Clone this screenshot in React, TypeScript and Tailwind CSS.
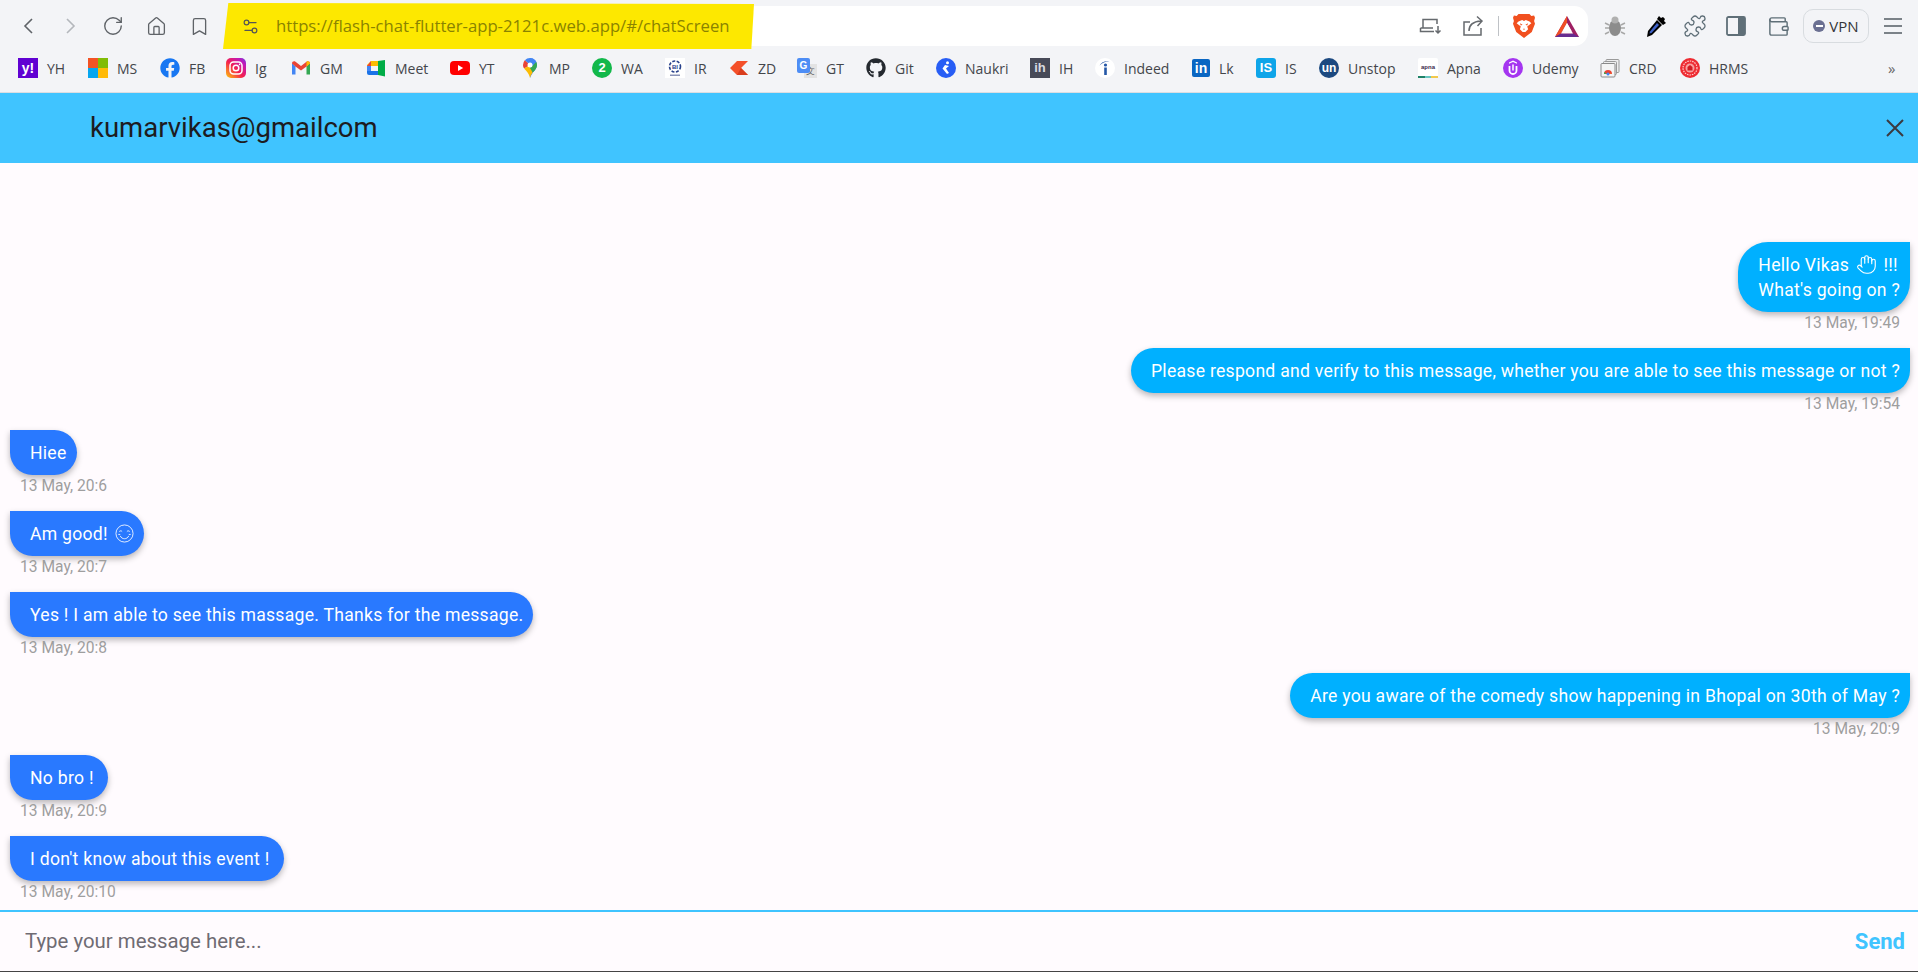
import type { ReactNode } from "react";
import { Bookmark, Hand, Home, Puzzle, RotateCw, Settings2, Wallet } from "lucide-react";
import { FaFacebook, FaGithub } from "react-icons/fa";

function Yahoo() {
  return (
    <div className="flex h-5 w-5 items-center justify-center bg-[#6001d2] font-['Liberation_Sans',sans-serif] text-[14px] font-bold text-white">
      y!
    </div>
  );
}

function Microsoft() {
  return (
    <div className="grid h-5 w-5 grid-cols-2 grid-rows-2">
      <div className="bg-[#f35325]" />
      <div className="bg-[#81bc06]" />
      <div className="bg-[#05a6f0]" />
      <div className="bg-[#ffba08]" />
    </div>
  );
}

function Instagram() {
  return (
    <svg viewBox="0 0 20 20" className="h-5 w-5">
      <defs>
        <linearGradient id="ig" x1="0" y1="1" x2="1" y2="0">
          <stop offset="0" stopColor="#fdc90b" />
          <stop offset="0.45" stopColor="#f5204e" />
          <stop offset="0.8" stopColor="#c118b8" />
          <stop offset="1" stopColor="#6a3fe0" />
        </linearGradient>
      </defs>
      <rect width="20" height="20" rx="5" fill="url(#ig)" />
      <rect x="4" y="4" width="12" height="12" rx="3.5" fill="none" stroke="#fff" strokeWidth="1.5" />
      <circle cx="10" cy="10" r="2.8" fill="none" stroke="#fff" strokeWidth="1.5" />
      <circle cx="13.6" cy="6.4" r="0.8" fill="#fff" />
    </svg>
  );
}

function Gmail() {
  return (
    <svg viewBox="0 0 20 20" className="h-5 w-5">
      <path d="M1 5v11.5h3.500V8.500z" fill="#4285f4" />
      <path d="M19 5v11.500h-3.500V8.500z" fill="#34a853" />
      <path d="M1 5.500C1 3.500 3 2.700 4.500 3.800L10 8l5.500-4.200C17 2.700 19 3.500 19 5.500l-3.500 3L10 12.500 4.500 8.500z" fill="#ea4335" />
      <path d="M15.500 3.800C17 2.700 19 3.500 19 5.500l-3.500 3z" fill="#fbbc04" />
    </svg>
  );
}

function Meet() {
  return (
    <svg viewBox="0 0 20 20" className="h-5 w-5">
      <path d="M5 3h7v5H1V7z" fill="#fbbc04" />
      <path d="M1 8h4v5H1z" fill="#4285f4" />
      <path d="M1 13h11v4H3a2 2 0 0 1-2-2z" fill="#1a73e8" />
      <path d="M12 3v14l7 1.500V2z" fill="#00ac47" />
      <path d="M5 8h7v5H5z" fill="#f3f4f7" />
      <path d="M5 3v5H1z" fill="#ea4335" />
    </svg>
  );
}

function Youtube() {
  return (
    <svg viewBox="0 0 20 20" className="h-5 w-5">
      <rect y="3" width="20" height="14" rx="4" fill="#f00" />
      <path d="M8 7l5.200 3L8 13z" fill="#fff" />
    </svg>
  );
}

function Maps() {
  return (
    <svg viewBox="0 0 20 20" className="h-5 w-5">
      <path d="M10 0a7 7 0 0 1 7 7c0 4-4 6-7 13z" fill="#4285f4" />
      <path d="M10 0a7 7 0 0 0-5.200 2.300L10 7l5.200-4.700A7 7 0 0 0 10 0z" fill="#4285f4" />
      <path d="M4.800 2.300A7 7 0 0 0 3 7c0 1.400.5 2.500 1.200 3.500L10 7z" fill="#ea4335" />
      <path d="M4.200 10.500C6 13 9 15 10 20c.5-2.400 1.500-4 2.700-5.500L10 7z" fill="#fbbc04" />
      <path d="M12.700 14.500C14.800 12.500 17 10.500 17 7c0-1.100-.3-2.300-.8-3.200L10 10z" fill="#34a853" />
      <path d="M15.200 2.300L10 7v3l6.200-6.200a7 7 0 0 0-1-1.500z" fill="#4285f4" />
      <circle cx="10" cy="7" r="2.500" fill="#fff" />
    </svg>
  );
}

function Whatsapp() {
  return (
    <div className="flex h-5 w-5 items-center justify-center rounded-full bg-[#12b84a] font-['Liberation_Sans',sans-serif] text-[13px] font-bold text-white">
      2
    </div>
  );
}

function Irctc() {
  return (
    <svg viewBox="0 0 20 20" className="h-5 w-5">
      <rect width="20" height="20" fill="#fff" />
      <circle cx="10" cy="8.500" r="5.500" fill="none" stroke="#27408b" strokeWidth="1.600" strokeDasharray="3 1.500" />
      <text x="10" y="10.500" textAnchor="middle" fontSize="6" fontWeight="700" fill="#27408b" fontFamily="Liberation Sans">BI</text>
      <rect x="5" y="16.500" width="10" height="1.500" fill="#8a93b8" />
    </svg>
  );
}

function Zd() {
  return (
    <svg viewBox="0 0 20 20" className="h-5 w-5">
      <path d="M8 3h11l-7 7 7 7H8l-7-7z" fill="#f4502a" />
      <path d="M12 10l7 7H8z" fill="#d93d1d" />
    </svg>
  );
}

function Translate() {
  return (
    <div className="relative h-5 w-5">
      <div className="absolute bottom-0 right-0 flex h-[14px] w-[13px] items-center justify-center bg-[#e3e3e3] text-[9px] text-[#666]">文</div>
      <div className="absolute left-0 top-0 flex h-[15px] w-[13px] items-center justify-center rounded-[2px] bg-[#4d8df5] font-['Liberation_Sans',sans-serif] text-[10px] font-bold text-white">G</div>
    </div>
  );
}

function Naukri() {
  return (
    <svg viewBox="0 0 20 20" className="h-5 w-5">
      <circle cx="10" cy="10" r="10" fill="#275df5" />
      <circle cx="11.500" cy="4.800" r="1.500" fill="#fff" />
      <path d="M9 7l-2.500 3.500L11 16l2-1-3-4.500L13 8z" fill="#fff" />
    </svg>
  );
}

function IndieHackers() {
  return (
    <div className="flex h-5 w-5 items-center justify-center bg-[#474a58] font-['Liberation_Sans',sans-serif] text-[13px] font-bold text-[#d8dae0]">
      ih
    </div>
  );
}

function Indeed() {
  return (
    <svg viewBox="0 0 20 20" className="h-5 w-5">
      <circle cx="10" cy="10" r="10" fill="#fff" />
      <path d="M4.500 7.500C6.500 4 10.500 2.500 14.500 3.500 11 3.200 7.500 4.500 4.500 7.500z" fill="#2557a7" />
      <circle cx="10.500" cy="7" r="1.600" fill="#2557a7" />
      <rect x="9.200" y="9.500" width="2.600" height="7.500" fill="#2557a7" />
    </svg>
  );
}

function Linkedin() {
  return (
    <div className="flex h-[18px] w-[18px] items-center justify-center rounded-[2px] bg-[#0a66c2] font-['Liberation_Sans',sans-serif] text-[14px] font-bold text-white">
      in
    </div>
  );
}

function InterviewSchool() {
  return (
    <div className="flex h-5 w-5 items-center justify-center rounded-[3px] bg-[#0ea5e9] font-['Liberation_Sans',sans-serif] text-[13px] font-bold text-white">
      IS
    </div>
  );
}

function Unstop() {
  return (
    <div className="flex h-5 w-5 items-center justify-center rounded-full bg-[#1c4980] font-['Liberation_Sans',sans-serif] text-[12px] font-bold text-white">
      un
    </div>
  );
}

function Apna() {
  return (
    <div className="flex h-5 w-5 flex-col items-center justify-between rounded-[2px] bg-white">
      <div className="mt-[6px] font-['Liberation_Sans',sans-serif] text-[6px] font-bold leading-[7px] text-[#3c2a4d]">apna</div>
      <div className="flex h-[2px] w-full">
        <div className="w-1/3 bg-[#1f8268]" />
        <div className="w-1/3 bg-[#67c6c0]" />
        <div className="w-1/3 bg-[#f2c94c]" />
      </div>
    </div>
  );
}

function Udemy() {
  return (
    <svg viewBox="0 0 20 20" className="h-5 w-5">
      <circle cx="10" cy="10" r="10" fill="#a435f0" />
      <path d="M6 4.500L10 2.500l4 2v1.300L10 4 6 5.800z" fill="#fff" />
      <path d="M6.500 8v4.500a3.500 3.500 0 0 0 7 0V8" fill="none" stroke="#fff" strokeWidth="1.800" />
      <path d="M10 6.500v6" stroke="#fff" strokeWidth="1.500" />
    </svg>
  );
}

function Crd() {
  return (
    <svg viewBox="0 0 20 20" className="h-5 w-5">
      <rect x="6" y="1.500" width="13" height="13" rx="1" fill="#eee" stroke="#9a9a9a" />
      <rect x="3.500" y="3.500" width="13" height="13" rx="1" fill="#eee" stroke="#9a9a9a" />
      <rect x="1" y="5.500" width="14" height="13.500" rx="1" fill="#f4f4f4" stroke="#8a8a8a" />
      <path d="M4 16a4 4 0 0 1 8 0z" fill="#ea4335" />
      <path d="M4 16a4 4 0 0 1 .5-2l2 2z" fill="#34a853" />
      <path d="M9 16a4 4 0 0 1 3 0z" fill="#fbbc04" />
      <circle cx="8" cy="16" r="1.500" fill="#4285f4" />
    </svg>
  );
}

function Hrms() {
  return (
    <svg viewBox="0 0 20 20" className="h-5 w-5">
      <circle cx="10" cy="10" r="10" fill="#ee2b32" />
      <circle cx="10" cy="10" r="7" fill="none" stroke="#ffd0d0" strokeWidth="1.200" strokeDasharray="1.500 1" />
      <circle cx="10" cy="10" r="4.500" fill="#f7a0a0" />
      <path d="M7.500 12.500h5V9L10 7 7.500 9z" fill="#d11a22" />
    </svg>
  );
}

function BraveLion() {
  return (
    <svg viewBox="0 0 24 28" className="h-[26px] w-[22px]">
      <path d="M6 1h12l2 2 3-.5L24 5l-1 3.500 1 3-3.500 9L12 27l-8.500-6.500L0 11.500l1-3L0 5l1-2.500L4 3z" fill="#f1501f" />
      <path d="M6 9l4-1.500 2 1 2-1L18 9l2 2-4.500 3.500 1 3-3 3h-3l-3-3 1-3L4 11z" fill="#fff" />
      <path d="M10 21h4l-2 2.500z" fill="#f1501f" />
      <path d="M7.500 11l3 1.500-2 1zM16.500 11l-3 1.500 2 1zM11 17h2l-1 1.500z" fill="#f1501f" />
    </svg>
  );
}

function BatTriangle() {
  return (
    <svg viewBox="0 0 24 22" className="h-[22px] w-6">
      <path d="M12 1L0 22h24z" fill="#9e1f63" />
      <path d="M12 1L0 22l6-3.500L12 8z" fill="#f04e23" />
      <path d="M0 22h24l-6-3.500H6z" fill="#662d91" />
      <path d="M12 8l-6 10.500h12z" fill="#fbfbfb" />
      <path d="M12 8l4.500 8H8z" fill="#fff" />
    </svg>
  );
}

function LaptopDown() {
  return (
    <svg viewBox="0 0 24 24" fill="none" stroke="#666a6e" strokeWidth="1.500" className="h-6 w-6">
      <path d="M4 14V5.500h14V10" />
      <path d="M1.500 14v3.500h13.500M1.500 14H14" />
      <path d="M19 12v7M16.500 16.500L19 19l2.500-2.500" />
    </svg>
  );
}

function ShareArrow() {
  return (
    <svg viewBox="0 0 24 24" fill="none" stroke="#666a6e" strokeWidth="1.500" className="h-6 w-6">
      <path d="M9 8H3v13h17v-7" />
      <path d="M8 17c0-6 4-9.500 12-10M16 2.500L21 7l-4.500 5" />
    </svg>
  );
}

function BugIcon() {
  return (
    <svg viewBox="0 0 24 24" className="h-6 w-6">
      <ellipse cx="12" cy="14" rx="6" ry="8" fill="#8c8c8c" />
      <circle cx="12" cy="6" r="3.500" fill="#b0b0b0" />
      <path d="M2 9l4 2M22 9l-4 2M2 14h4M22 14h-4M2 20l4-2M22 20l-4-2" stroke="#a8a8a8" strokeWidth="1.500" />
    </svg>
  );
}

function Dropper() {
  return (
    <svg viewBox="0 0 24 24" className="h-6 w-6">
      <path d="M15 2l2 2 2-1 2 2-1 2 2 2-3 2-6-6z" fill="#000" />
      <path d="M13 6l5 5L8 21l-5 2 1-6z" fill="#000" />
      <path d="M13 9l2 2-7.500 8-2 .5.500-2z" fill="#3f62c8" />
    </svg>
  );
}

function PanelIcon() {
  return (
    <svg viewBox="0 0 20 20" className="h-5 w-5">
      <rect x="1" y="1" width="18" height="18" rx="1.500" fill="none" stroke="#5f6f78" strokeWidth="1.800" />
      <rect x="12" y="1" width="7" height="18" fill="#5f6f78" />
    </svg>
  );
}

function SmileFace() {
  return (
    <svg viewBox="0 0 20 20" fill="none" stroke="#fff" strokeWidth="0.900" className="ml-[7px] inline-block h-[19px] w-[19px] align-[-3px]">
      <circle cx="10" cy="10" r="9" />
      <path d="M4.500 8c.7-1 2.300-1 3 0M12.500 8c.7-1 2.300-1 3 0" />
      <path d="M5.500 12.500c1 2.200 2.800 3 4.500 3s3.500-.8 4.500-3" />
      <path d="M3.500 11h2M14.500 11h2" />
    </svg>
  );
}

const bookmarks: { label: string; icon: ReactNode; width: string }[] = [
  { label: "YH", icon: <Yahoo />, width: "w-[70px]" },
  { label: "MS", icon: <Microsoft />, width: "w-[72px]" },
  { label: "FB", icon: <FaFacebook className="h-5 w-5 text-[#1877f2]" />, width: "w-[66px]" },
  { label: "Ig", icon: <Instagram />, width: "w-[65px]" },
  { label: "GM", icon: <Gmail />, width: "w-[75px]" },
  { label: "Meet", icon: <Meet />, width: "w-[84px]" },
  { label: "YT", icon: <Youtube />, width: "w-[70px]" },
  { label: "MP", icon: <Maps />, width: "w-[72px]" },
  { label: "WA", icon: <Whatsapp />, width: "w-[73px]" },
  { label: "IR", icon: <Irctc />, width: "w-[64px]" },
  { label: "ZD", icon: <Zd />, width: "w-[68px]" },
  { label: "GT", icon: <Translate />, width: "w-[69px]" },
  { label: "Git", icon: <FaGithub className="h-5 w-5 text-[#24292f]" />, width: "w-[70px]" },
  { label: "Naukri", icon: <Naukri />, width: "w-[94px]" },
  { label: "IH", icon: <IndieHackers />, width: "w-[65px]" },
  { label: "Indeed", icon: <Indeed />, width: "w-[97px]" },
  { label: "Lk", icon: <Linkedin />, width: "w-[64px]" },
  { label: "IS", icon: <InterviewSchool />, width: "w-[63px]" },
  { label: "Unstop", icon: <Unstop />, width: "w-[99px]" },
  { label: "Apna", icon: <Apna />, width: "w-[85px]" },
  { label: "Udemy", icon: <Udemy />, width: "w-[97px]" },
  { label: "CRD", icon: <Crd />, width: "w-[80px]" },
  { label: "HRMS", icon: <Hrms />, width: "w-[90px]" },
];

function BrowserChrome() {
  return (
    <div className="h-[93px] shrink-0 border-b border-[#dcdee2] bg-[#f3f4f7] font-['Open_Sans',sans-serif]">
      {/* Toolbar */}
      <div className="flex h-[46px] items-start pt-[6px] text-[#5f6368]">
        <div className="flex h-10 w-[228px] items-center pl-[19px]">
          <svg viewBox="0 0 20 20" fill="none" stroke="#5f6368" strokeWidth="1.600" className="h-5 w-5">
            <path d="M13 3l-7 7 7 7" />
          </svg>
          <svg viewBox="0 0 20 20" fill="none" stroke="#b4b7bc" strokeWidth="1.600" className="ml-[21px] h-5 w-5">
            <path d="M7 3l7 7-7 7" />
          </svg>
          <RotateCw size={22} strokeWidth={1.5} className="ml-[22px]" />
          <Home size={21} strokeWidth={1.5} className="ml-[22px]" />
          <Bookmark size={21} strokeWidth={1.5} className="ml-[22px]" />
        </div>

        {/* Address bar */}
        <div className="relative flex h-10 w-[1360px] items-center justify-end rounded-r-[14px] bg-white pr-[3px]">
          <div className="absolute left-[-5px] top-[-3px] flex h-[46px] w-[531px] items-center bg-[#fde800] pl-[18px] text-[#8a8300] [clip-path:polygon(1%_0,100%_2%,99.500%_100%,0_100%)]">
            <Settings2 size={19} strokeWidth={1.5} className="text-[#555]" />
            <span className="ml-[16px] text-[16.7px]">https://flash-chat-flutter-app-2121c.web.app/#/chatScreen</span>
          </div>
          <LaptopDown />
          <div className="ml-[18px]">
            <ShareArrow />
          </div>
          <div className="ml-[13px] h-5 w-px bg-[#bfc2c6]" />
          <div className="ml-[14px]">
            <BraveLion />
          </div>
          <div className="ml-[20px] mr-[6px]">
            <BatTriangle />
          </div>
        </div>

        <div className="ml-[15px] flex h-10 items-center">
          <BugIcon />
          <div className="ml-[17px]">
            <Dropper />
          </div>
          <Puzzle size={24} strokeWidth={1.3} className="ml-[15px] text-[#5f6f78]" />
          <div className="ml-[19px]">
            <PanelIcon />
          </div>
          <Wallet size={23} strokeWidth={1.5} className="ml-[21px] text-[#5f6f78]" />
          <div className="ml-[13px] flex h-[34px] w-[66px] items-center justify-center gap-[4px] rounded-[10px] border border-[#d8dce0] text-[15px] text-[#33363a]">
            <div className="relative h-3 w-3 rounded-full bg-[#6b7092]">
              <div className="absolute left-[2.500px] top-[5px] h-[2px] w-[7px] bg-white" />
            </div>
            VPN
          </div>
          <div className="ml-[15px] flex w-[18px] flex-col gap-[5px]">
            <div className="h-[2px] bg-[#7b8288]" />
            <div className="h-[2px] bg-[#7b8288]" />
            <div className="h-[2px] bg-[#7b8288]" />
          </div>
        </div>
      </div>

      {/* Bookmarks */}
      <div className="flex h-[44px] items-center pl-[18px] text-[14px] text-[#43464b]">
        {bookmarks.map((b) => (
          <div key={b.label} className={`flex items-center gap-[9px] ${b.width}`}>
            {b.icon}
            <span>{b.label}</span>
          </div>
        ))}
        <span className="ml-[118px] text-[15px] text-[#666]">»</span>
      </div>
    </div>
  );
}

function Message({ mine, time, children }: { mine?: boolean; time: string; children: ReactNode }) {
  return (
    <div className={mine ? "flex flex-col items-end pr-2" : "flex flex-col items-start pl-[10px]"}>
      <div
        className={
          mine
            ? "rounded-[30px] rounded-tr-none bg-[#00b0ff] pb-[9px] pl-[20px] pr-[10px] pt-[11px] text-[17.6px] leading-[25px] tracking-[0.27px] text-white shadow-[0_3px_6px_rgba(0,0,0,0.28)]"
            : "rounded-[30px] rounded-tl-none bg-[#2979ff] pb-[9px] pl-[20px] pr-[10px] pt-[11px] text-[17.6px] leading-[25px] tracking-[0.27px] text-white shadow-[0_3px_6px_rgba(0,0,0,0.28)]"
        }
      >
        {children}
      </div>
      <div
        className={
          mine
            ? "mt-[2px] pr-[10px] text-[15.6px] leading-[19px] text-[#9e9e9e]"
            : "mt-[2px] pl-[10px] text-[15.6px] leading-[19px] text-[#9e9e9e]"
        }
      >
        {time}
      </div>
    </div>
  );
}

export default function App() {
  return (
    <div className="flex h-screen flex-col overflow-hidden bg-[#fffbfe] font-['Roboto',sans-serif]">
      <BrowserChrome />

      {/* App bar */}
      <div className="flex h-[70px] shrink-0 items-center justify-between bg-[#40c4ff] pl-[90px] pr-[14px] text-[#1d1b20]">
        <h1 className="text-[27.5px]">kumarvikas@gmailcom</h1>
        <svg viewBox="0 0 18 18" fill="none" stroke="#3b3a40" strokeWidth="2" className="h-[18px] w-[18px]">
          <path d="M1 1l16 16M17 1L1 17" />
        </svg>
      </div>

      {/* Chat */}
      <div className="flex flex-1 flex-col justify-end gap-[15.3px] overflow-hidden pb-[8px]">
        <Message mine time="13 May, 19:49">
          <div>
            Hello Vikas <Hand size={21} strokeWidth={1.3} className="mx-[2px] inline-block align-[-4px]" /> !!!
          </div>
          <div>What's going on ?</div>
        </Message>
        <Message mine time="13 May, 19:54">
          Please respond and verify to this message, whether you are able to see this message or not ?
        </Message>
        <Message time="13 May, 20:6">Hiee</Message>
        <Message time="13 May, 20:7">
          Am good!
          <SmileFace />
        </Message>
        <Message time="13 May, 20:8">Yes ! I am able to see this massage. Thanks for the message.</Message>
        <Message mine time="13 May, 20:9">
          Are you aware of the comedy show happening in Bhopal on 30th of May ?
        </Message>
        <Message time="13 May, 20:9">No bro !&nbsp;</Message>
        <Message time="13 May, 20:10">I don't know about this event !&nbsp;</Message>
      </div>

      {/* Input */}
      <div className="flex h-[62px] shrink-0 items-center justify-between border-b border-t-2 border-b-[#444] border-t-[#40c4ff] pl-[25px] pr-[13px]">
        <input
          placeholder="Type your message here..."
          className="w-[800px] bg-transparent text-[20.4px] outline-none placeholder:text-[#6f6b73]"
        />
        <span className="text-[22px] font-bold text-[#40c4ff]">Send</span>
      </div>
    </div>
  );
}
